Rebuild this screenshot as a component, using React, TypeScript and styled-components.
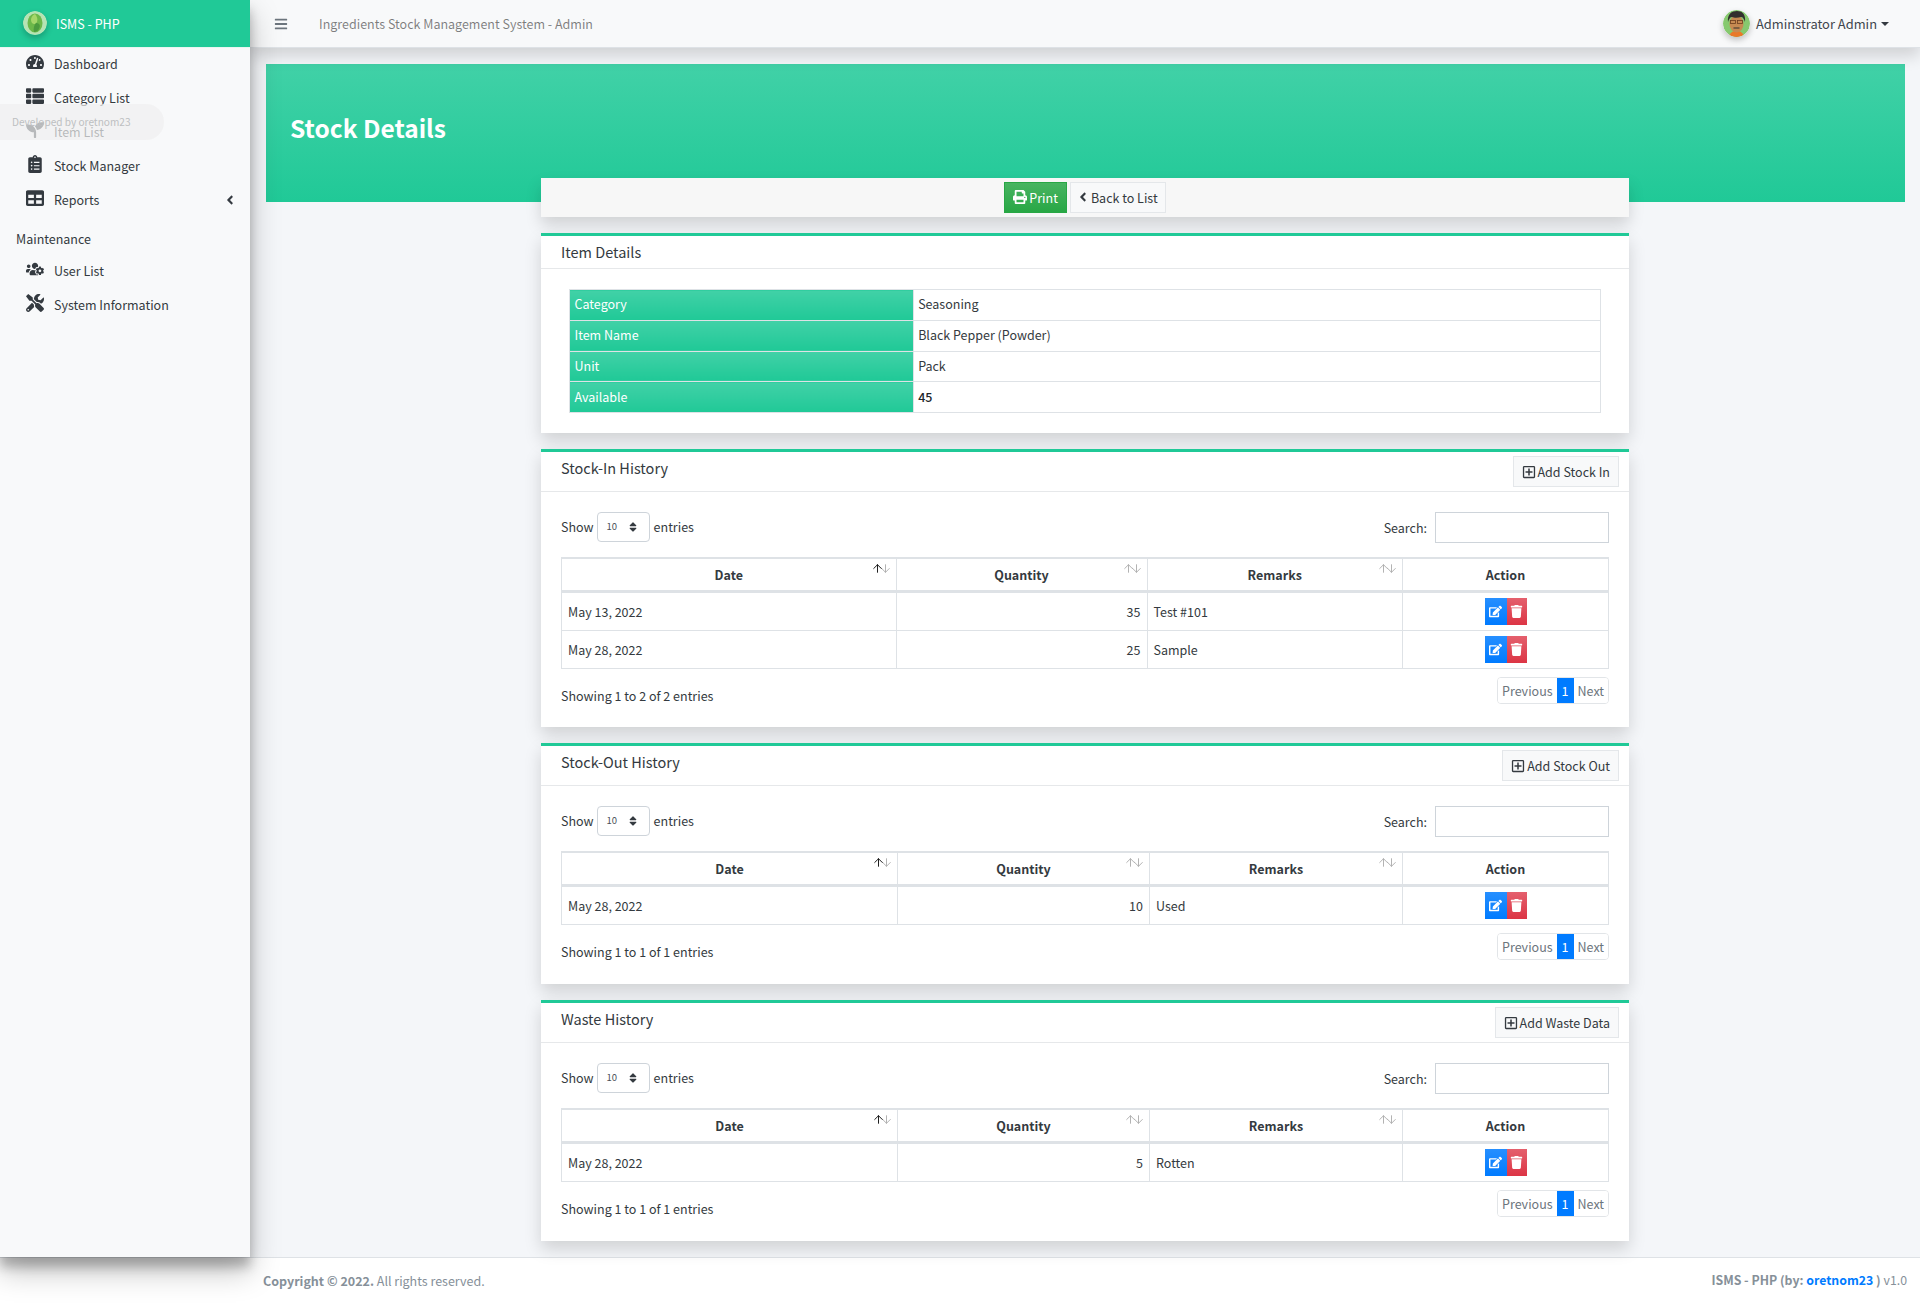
import styled, { createGlobalStyle } from 'styled-components';
import {
  FaAngleLeft,
  FaBars,
  FaClipboardList,
  FaEdit,
  FaPrint,
  FaRegPlusSquare,
  FaSeedling,
  FaSort,
  FaTable,
  FaTachometerAlt,
  FaThList,
  FaTools,
  FaTrash,
  FaUsersCog,
} from 'react-icons/fa';
import { ArrowDown, ArrowUp } from 'lucide-react';

type HistoryRow = {
  date: string;
  quantity: number;
  remarks: string;
};

type History = {
  title: string;
  addLabel: string;
  columns: number[];
  rows: HistoryRow[];
};

const histories: History[] = [
  {
    title: 'Stock-In History',
    addLabel: 'Add Stock In',
    columns: [334.5, 251, 255.5, 206],
    rows: [
      { date: 'May 13, 2022', quantity: 35, remarks: 'Test #101' },
      { date: 'May 28, 2022', quantity: 25, remarks: 'Sample' },
    ],
  },
  {
    title: 'Stock-Out History',
    addLabel: 'Add Stock Out',
    columns: [336, 252, 253, 206],
    rows: [{ date: 'May 28, 2022', quantity: 10, remarks: 'Used' }],
  },
  {
    title: 'Waste History',
    addLabel: 'Add Waste Data',
    columns: [336, 252, 253, 206],
    rows: [{ date: 'May 28, 2022', quantity: 5, remarks: 'Rotten' }],
  },
];

const details = [
  { label: 'Category', value: 'Seasoning' },
  { label: 'Item Name', value: 'Black Pepper (Powder)' },
  { label: 'Unit', value: 'Pack' },
  { label: 'Available', value: '45', strong: true },
];

function SortIcon({ active }: { active?: boolean }) {
  return (
    <SortArrows $active={active}>
      <ArrowUp size={13} strokeWidth={1.8} />
      <ArrowDown size={13} strokeWidth={1.8} />
    </SortArrows>
  );
}

function HistoryCard({ history }: { history: History }) {
  const count = history.rows.length;
  return (
    <Card>
      <CardHeader>
        <CardTitle>{history.title}</CardTitle>
        <AddButton>
          <FaRegPlusSquare />
          {history.addLabel}
        </AddButton>
      </CardHeader>
      <CardBody $single={count === 1}>
        <TableTools>
          <LengthLabel>
            Show
            <LengthSelect>
              10
              <FaSort />
            </LengthSelect>
            entries
          </LengthLabel>
          <SearchLabel>
            Search:
            <SearchInput type="search" />
          </SearchLabel>
        </TableTools>
        <HistoryTable>
          <colgroup>
            {history.columns.map((width, index) => (
              <col key={index} width={width} />
            ))}
          </colgroup>
          <thead>
            <tr>
              <Th>
                Date
                <SortIcon active />
              </Th>
              <Th>
                Quantity
                <SortIcon />
              </Th>
              <Th>
                Remarks
                <SortIcon />
              </Th>
              <Th>Action</Th>
            </tr>
          </thead>
          <tbody>
            {history.rows.map((row) => (
              <tr key={row.date + row.quantity}>
                <Td>{row.date}</Td>
                <Td $align="right">{row.quantity}</Td>
                <Td>{row.remarks}</Td>
                <Td $align="center">
                  <ActionGroup>
                    <EditButton>
                      <FaEdit />
                    </EditButton>
                    <DeleteButton>
                      <FaTrash />
                    </DeleteButton>
                  </ActionGroup>
                </Td>
              </tr>
            ))}
          </tbody>
        </HistoryTable>
        <TableFooter>
          <TableInfo>
            Showing 1 to {count} of {count} entries
          </TableInfo>
          <Pagination>
            <PageLink>Previous</PageLink>
            <PageLink $active>1</PageLink>
            <PageLink>Next</PageLink>
          </Pagination>
        </TableFooter>
      </CardBody>
    </Card>
  );
}

function App() {
  return (
    <>
      <GlobalStyle />
      <Page>
        <Sidebar>
          <Brand>
            <svg width="24" height="24" viewBox="0 0 24 24">
              <circle cx="12" cy="12" r="12" fill="#b6e3b4" />
              <ellipse cx="12" cy="12" rx="7.5" ry="9.5" fill="#6cb84a" />
              <path d="M12 3c-4 2-5 6-3 9 2 2 4 1 5-1 1-3 0-6-2-8z" fill="#a5d66a" />
              <path d="M13 12c3 0 5 2 3 6-1 2-3 3-5 3-1-3 0-7 2-9z" fill="#4b9a3e" />
            </svg>
            <BrandText>ISMS - PHP</BrandText>
          </Brand>
          <NavItem>
            <NavIcon>
              <FaTachometerAlt />
            </NavIcon>
            Dashboard
          </NavItem>
          <NavItem>
            <NavIcon>
              <FaThList />
            </NavIcon>
            Category List
          </NavItem>
          <NavItem>
            <NavIcon>
              <FaSeedling />
            </NavIcon>
            Item List
          </NavItem>
          <NavItem>
            <NavIcon>
              <FaClipboardList />
            </NavIcon>
            Stock Manager
          </NavItem>
          <NavItem>
            <NavIcon>
              <FaTable />
            </NavIcon>
            Reports
            <NavAngle>
              <FaAngleLeft />
            </NavAngle>
          </NavItem>
          <NavHeader>Maintenance</NavHeader>
          <NavItem>
            <NavIcon>
              <FaUsersCog />
            </NavIcon>
            User List
          </NavItem>
          <NavItem>
            <NavIcon>
              <FaTools />
            </NavIcon>
            System Information
          </NavItem>
          <DevBadge>Developed by oretnom23</DevBadge>
        </Sidebar>

        <Main>
          <Navbar>
            <NavbarLeft>
              <FaBars />
              <NavbarTitle>Ingredients Stock Management System - Admin</NavbarTitle>
            </NavbarLeft>
            <UserMenu>
              <svg width="27" height="27" viewBox="0 0 27 27">
                <defs>
                  <clipPath id="avatar-clip">
                    <circle cx="13.5" cy="13.5" r="13.5" />
                  </clipPath>
                </defs>
                <g clipPath="url(#avatar-clip)">
                  <rect width="27" height="27" fill="#86c96f" />
                  <path d="M6 27c1-5 4-6 7.500-6s6.500 1 7.500 6z" fill="#e9792a" />
                  <ellipse cx="13.500" cy="14" rx="7" ry="8.500" fill="#c68a52" />
                  <path d="M5 12C4 4 9 1 14 1s9 3 8 11c-1-3-2-5-4-5-3 1-7 1-9 0-2 0-3 2-4 5z" fill="#33302e" />
                  <rect x="7.500" y="10.500" width="5" height="3" fill="none" stroke="#6b3d1f" strokeWidth="0.8" />
                  <rect x="14.500" y="10.500" width="5" height="3" fill="none" stroke="#6b3d1f" strokeWidth="0.8" />
                  <path d="M10.500 18h6" stroke="#33302e" strokeWidth="1.200" />
                </g>
              </svg>
              <UserName>Adminstrator Admin</UserName>
              <Caret />
            </UserMenu>
          </Navbar>

          <ContentHeader>
            <PageTitle>Stock Details</PageTitle>
          </ContentHeader>

          <Column>
            <PrintBar>
              <PrintButton>
                <FaPrint />
                Print
              </PrintButton>
              <BackButton>
                <FaAngleLeft />
                Back to List
              </BackButton>
            </PrintBar>

            <Card>
              <CardHeader>
                <CardTitle>Item Details</CardTitle>
              </CardHeader>
              <DetailsBody>
                <DetailsTable>
                  <colgroup>
                    <col width="33.33%" />
                    <col width="66.67%" />
                  </colgroup>
                  <tbody>
                    {details.map((item) => (
                      <tr key={item.label}>
                        <DetailsLabel>{item.label}</DetailsLabel>
                        <DetailsValue $strong={item.strong}>{item.value}</DetailsValue>
                      </tr>
                    ))}
                  </tbody>
                </DetailsTable>
              </DetailsBody>
            </Card>

            {histories.map((history) => (
              <HistoryCard key={history.title} history={history} />
            ))}
          </Column>
        </Main>

        <Footer>
          <span>
            <b>Copyright © 2022.</b> All rights reserved.
          </span>
          <FooterCredit>
            <b>
              ISMS - PHP (by: <FooterLink>oretnom23</FooterLink> )
            </b>{' '}
            v1.0
          </FooterCredit>
        </Footer>
      </Page>
    </>
  );
}

const GlobalStyle = createGlobalStyle`
  * {
    box-sizing: border-box;
  }

  body {
    margin: 0;
    background-color: #fff;
    color: #212529;
    font-family: "Noto Sans CJK SC", "Noto Sans", sans-serif;
    font-size: 12.500px;
    line-height: 21px;
  }
`;

const Page = styled.div`
  display: grid;
  grid-template-columns: 250px 1fr;
  grid-template-rows: 1257px 48px;
  width: 100%;
  height: 1305px;
  overflow: hidden;
`;

const Sidebar = styled.aside`
  position: relative;
  z-index: 20;
  background-color: #f8f9fa;
  color: #343a40;
  box-shadow: 0 14px 28px rgba(0, 0, 0, 0.25), 0 10px 10px rgba(0, 0, 0, 0.22);
`;

const Brand = styled.div`
  display: flex;
  align-items: center;
  gap: 9px;
  height: 48px;
  margin-bottom: -1px;
  padding: 0 0 1px 23px;
  background-color: #20c997;
  border-bottom: 1px solid #e9f5f1;
  color: #fff;

  svg {
    border-radius: 50%;
    box-shadow: 0 3px 6px rgba(0, 0, 0, 0.23);
  }
`;

const BrandText = styled.span`
  font-size: 12.500px;
`;

const NavItem = styled.div`
  display: flex;
  align-items: center;
  height: 34px;
  padding: 0 0 2px 25px;
  color: #343a40;
`;

const NavIcon = styled.span`
  display: flex;
  justify-content: center;
  width: 20px;
  margin: -3px 9px 0 0;
  color: #343a40;

  svg {
    flex: none;
    width: auto;
    height: 18px;
  }
`;

const NavAngle = styled.span`
  display: flex;
  margin: 2px 0 0 auto;
  padding-right: 13px;
  font-size: 14px;
`;

const NavHeader = styled.div`
  display: flex;
  align-items: flex-end;
  height: 37px;
  padding: 0 0 5px 16px;
  color: #343a40;
`;

const DevBadge = styled.div`
  position: absolute;
  top: 104px;
  left: 0;
  width: 164px;
  height: 36px;
  padding-left: 12px;
  border-radius: 0 18px 18px 0;
  background-color: rgba(240, 240, 240, 0.7);
  color: #bdbfc1;
  font-size: 10.100px;
  line-height: 36px;
`;

const Main = styled.main`
  min-width: 0;
  background-color: #f4f6f9;
`;

const Navbar = styled.header`
  position: relative;
  z-index: 10;
  display: flex;
  align-items: center;
  justify-content: space-between;
  height: 48px;
  padding: 0 31px 0 24px;
  background-color: #f8f9fa;
  border-bottom: 1px solid #dee2e6;
  box-shadow: 0 0.5rem 1rem rgba(0, 0, 0, 0.15);
`;

const NavbarLeft = styled.div`
  display: flex;
  align-items: center;
  gap: 31px;
  color: #6c757d;
  font-size: 14px;

  span {
    font-size: 12.500px;
  }
`;

const NavbarTitle = styled.span`
  color: rgba(0, 0, 0, 0.5);
`;

const UserMenu = styled.div`
  display: flex;
  align-items: center;
  gap: 6px;
  color: #495057;

  svg {
    border-radius: 50%;
    box-shadow: 0 3px 6px rgba(0, 0, 0, 0.23);
  }
`;

const UserName = styled.span`
  color: #3f464d;
  font-size: 12.900px;
`;

const Caret = styled.span`
  width: 0;
  height: 0;
  margin-left: -2px;
  border-top: 4.200px solid #343a40;
  border-right: 4.200px solid transparent;
  border-left: 4.200px solid transparent;
`;

const ContentHeader = styled.div`
  display: flex;
  align-items: center;
  height: 138px;
  margin: 16px 15px 0 16px;
  padding: 0 24px 10px;
  background: linear-gradient(180deg, #41d1a7, #20c997);
`;

const PageTitle = styled.h1`
  margin: 0;
  color: #fff;
  font-size: 24.500px;
  font-weight: 700;
  line-height: 34px;
`;

const Column = styled.div`
  position: relative;
  display: flex;
  flex-direction: column;
  gap: 16px;
  width: 1088px;
  margin: -24px auto 0;
`;

const PrintBar = styled.div`
  display: flex;
  justify-content: center;
  gap: 3px;
  height: 39px;
  padding-top: 4px;
  background-color: #f7f7f7;
  box-shadow: 0 0.5rem 1rem rgba(0, 0, 0, 0.15);
`;

const ToolbarButton = styled.div`
  display: inline-flex;
  align-items: center;
  height: 31px;
  padding: 0 8px 1px;
  border: 1px solid #e4e7ea;

  svg {
    flex: none;
    font-size: 14px;
  }
`;

const PrintButton = styled(ToolbarButton)`
  gap: 2px;
  padding: 0 8px 1px;
  border-color: #28a745;
  background: linear-gradient(180deg, #48b461, #28a745);
  color: #fff;
`;

const BackButton = styled(ToolbarButton)`
  gap: 1px;
  padding: 0 7px 1px 5px;
  background-color: #f8f9fa;
  color: #343a40;
`;

const Card = styled.section`
  background-color: #fff;
  border-top: 3px solid #20c997;
  box-shadow: 0 0.5rem 1rem rgba(0, 0, 0, 0.15);
`;

const CardHeader = styled.div`
  display: flex;
  align-items: flex-start;
  justify-content: space-between;
  padding: 4px 10px 4px 20px;
  border-bottom: 1px solid #e6e8ea;
`;

const CardTitle = styled.h3`
  margin: 0;
  color: #343a40;
  font-size: 14.500px;
  font-weight: 400;
  line-height: 24px;
`;

const AddButton = styled(ToolbarButton)`
  gap: 2px;
  padding: 0 8px;
  background-color: #f8f9fa;
  color: #343a40;
`;

const DetailsBody = styled.div`
  padding: 20px 28px;
`;

const DetailsTable = styled.table`
  width: 100%;
  border-collapse: collapse;
  table-layout: fixed;
`;

const DetailsLabel = styled.td`
  height: 30.750px;
  padding: 0 4.500px 2px;
  border: 1px solid #dee2e6;
  background: linear-gradient(180deg, #41d1a7, #20c997);
  color: #fff;
`;

const DetailsValue = styled.td<{ $strong?: boolean }>`
  height: 30.750px;
  padding: 0 4.500px 2px;
  border: 1px solid #dee2e6;
  color: ${(props) => (props.$strong ? '#212529' : '#343a40')};
  font-weight: ${(props) => (props.$strong ? 500 : 400)};
`;

const CardBody = styled.div<{ $single?: boolean }>`
  padding: 20px 20px ${(props) => (props.$single ? 24 : 23)}px;
`;

const TableTools = styled.div`
  display: flex;
  align-items: center;
  justify-content: space-between;
  height: 31px;
  margin-bottom: 14px;
`;

const LengthLabel = styled.div`
  display: flex;
  align-items: center;
  gap: 3px;
  margin-top: -3px;
  color: #343a40;
`;

const LengthSelect = styled.div`
  display: flex;
  align-items: center;
  justify-content: space-between;
  width: 53px;
  height: 30px;
  margin: 1px 1px 0 0;
  padding: 0 10px 0 9px;
  border: 1px solid #ced4da;
  border-radius: 4px;
  color: #495057;
  font-size: 9.500px;

  svg {
    font-size: 12px;
    color: #343a40;
  }
`;

const SearchLabel = styled.div`
  display: flex;
  align-items: center;
  gap: 8px;
  color: #343a40;
`;

const SearchInput = styled.input`
  width: 174px;
  height: 31px;
  margin: 0;
  padding: 0 8px;
  border: 1px solid #ced4da;
  border-radius: 0;
  background-color: #fff;
  outline: none;
`;

const HistoryTable = styled.table`
  width: 1048px;
  border-collapse: separate;
  border-spacing: 0;
  border-top: 2px solid #dee2e6;
  border-left: 1px solid #dee2e6;
  table-layout: fixed;
`;

const Th = styled.th`
  position: relative;
  height: 34px;
  padding: 0 6px 1px;
  border-right: 1px solid #dee2e6;
  border-bottom: 3px solid #dee2e6;
  color: #343a40;
  font-weight: 700;
  text-align: center;
`;

const SortArrows = styled.span<{ $active?: boolean }>`
  position: absolute;
  top: 3px;
  right: 4px;
  display: flex;

  svg {
    margin-left: -5px;
    color: #000;
    opacity: 0.3;
  }

  svg:first-child {
    opacity: ${(props) => (props.$active ? 0.9 : 0.3)};
  }
`;

const Td = styled.td<{ $align?: string }>`
  height: 38px;
  padding: 0 6px 1px;
  border-right: 1px solid #dee2e6;
  border-bottom: 1px solid #dee2e6;
  color: #343a40;
  text-align: ${(props) => props.$align ?? 'left'};
`;

const ActionGroup = styled.div`
  display: inline-flex;
  vertical-align: middle;
`;

const ActionButton = styled.div`
  display: flex;
  align-items: center;
  justify-content: center;
  height: 27px;
  color: #fff;
  font-size: 13px;
`;

const EditButton = styled(ActionButton)`
  width: 22px;
  background: linear-gradient(180deg, #268fff, #007bff);
`;

const DeleteButton = styled(ActionButton)`
  width: 20px;
  background: linear-gradient(180deg, #e4606d, #dc3545);
`;

const TableFooter = styled.div`
  display: flex;
  align-items: flex-start;
  justify-content: space-between;
  height: 27px;
  margin-top: 8px;
`;

const TableInfo = styled.div`
  padding-top: 8px;
  color: #343a40;
`;

const Pagination = styled.div`
  display: flex;
  height: 27px;
  border: 1px solid #e2e5e8;
  border-radius: 4px;
  overflow: hidden;
`;

const PageLink = styled.span<{ $active?: boolean }>`
  display: flex;
  align-items: center;
  margin: ${(props) => (props.$active ? '-1px 0' : '0')};
  padding: 0 ${(props) => (props.$active ? 5 : 4)}px 1px;
  background-color: ${(props) => (props.$active ? '#007bff' : '#fff')};
  color: ${(props) => (props.$active ? '#fff' : '#6c757d')};
`;

const Footer = styled.footer`
  grid-column: 1 / -1;
  display: flex;
  align-items: center;
  justify-content: space-between;
  padding: 0 13px 2px 263px;
  background-color: #fff;
  border-top: 1px solid #dee2e6;
  color: #869099;
`;

const FooterCredit = styled.span`
  font-size: 12.300px;
`;

const FooterLink = styled.span`
  color: #007bff;
`;

export default App;
